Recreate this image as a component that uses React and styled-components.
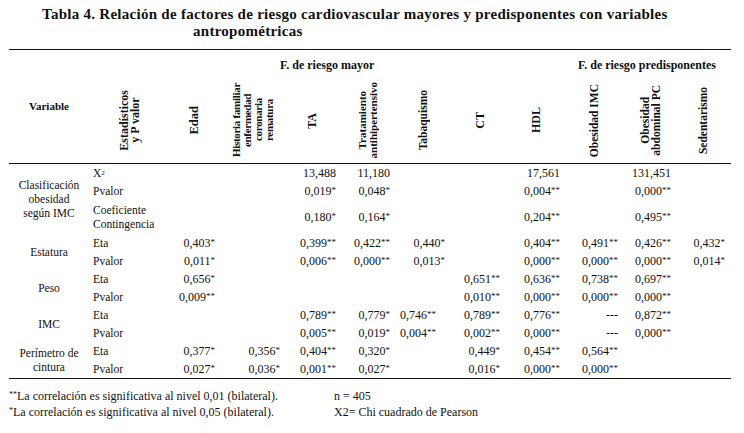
import React from "react";
import styled, { createGlobalStyle } from "styled-components";

const Global = createGlobalStyle`
  html, body { margin: 0; padding: 0; background: #fff; }
  body { font-family: "Liberation Serif", "Times New Roman", serif; color: #111; }
  * { box-sizing: border-box; }
`;

const COLS = "80px 77px 56px 61px 58px 54px 56px 58px 54px 62px 51px 55px";
const KEYS = ["edad", "hist", "ta", "trat", "tab", "ct", "hdl", "obimc", "obpc", "sed"];
const PADS = [7, 3, 5, 5, 6, 9, 3, 7, 5, 6];

const Page = styled.div`
  width: 744px;
  padding: 6px 13px 0 9px;
`;

const Title = styled.div`
  padding-left: 33px;
  font-weight: bold;
  font-size: 15px;
  line-height: 17px;
  letter-spacing: 0.27px;
`;

const TitleLine = styled.div`
  padding-left: ${(p) => p.$indent || 0}px;
  white-space: nowrap;
`;

const Table = styled.div`
  margin-top: 9px;
  width: 722px;
  border-top: 1px solid #111;
  border-bottom: 1px solid #111;
`;

const Head = styled.div`
  display: grid;
  grid-template-columns: ${COLS};
  grid-template-rows: 28px 85px;
  border-bottom: 1px solid #111;
  font-weight: bold;
  font-size: 11px;
`;

const VarHead = styled.div`
  grid-column: 1;
  grid-row: 1 / 3;
  display: flex;
  align-items: center;
  justify-content: center;
  padding-bottom: 2px;
`;

const GroupHead = styled.div`
  grid-row: 1;
  grid-column: ${(p) => p.$cols};
  display: flex;
  align-items: center;
  justify-content: ${(p) => (p.$indent ? "flex-start" : "center")};
  padding-left: ${(p) => p.$indent || 0}px;
  padding-top: 2px;
  font-size: 12px;
  white-space: nowrap;
`;

const RotCell = styled.div`
  grid-row: 2;
  display: flex;
  align-items: center;
  justify-content: center;
  padding-left: ${(p) => p.$shift || 0}px;
`;

const RotText = styled.div`
  writing-mode: vertical-rl;
  transform: rotate(180deg);
  text-align: center;
  font-size: ${(p) => p.$size || 11.5}px;
  letter-spacing: ${(p) => p.$track || 0}px;
  line-height: 11px;
  white-space: nowrap;
`;

const Body = styled.div`
  display: flex;
  flex-direction: column;
  font-size: 12px;
`;

const Group = styled.div`
  display: grid;
  grid-template-columns: ${COLS};
  grid-auto-rows: minmax(18px, auto);
`;

const VarName = styled.div`
  grid-column: 1;
  grid-row: 1 / span ${(p) => p.$span};
  display: flex;
  align-items: center;
  justify-content: center;
  text-align: center;
  line-height: 14px;
  font-size: 11.5px;
`;

const Stat = styled.div`
  grid-column: 2;
  display: flex;
  align-items: center;
  padding-left: 4px;
  line-height: 14px;
  font-size: 11.5px;
  padding-top: ${(p) => (p.$tall ? 3 : 0)}px;
  padding-bottom: ${(p) => (p.$tall ? 3 : 0)}px;
`;

const Val = styled.div`
  display: flex;
  align-items: center;
  justify-content: flex-end;
  padding-right: ${(p) => p.$pad}px;
  white-space: nowrap;
`;

const Stars = styled.span`
  font-size: 9px;
  position: relative;
  top: -1px;
`;

const Sup = styled.sup`
  font-size: 7px;
  line-height: 0;
`;

const Foot = styled.div`
  margin-top: 10px;
  display: grid;
  grid-template-columns: 325px 1fr;
  font-size: 12px;
  line-height: 15px;
`;

const FootStars = styled.span`
  font-size: 8px;
  position: relative;
  top: -3px;
`;

const headers = [
  { lines: ["Estadísticos", "y P valor"], shift: 4, size: 12 },
  { lines: ["Edad"], size: 12.5 },
  { lines: ["Historia familiar", "enfermedad", "coronaria", "rematura"], size: 11, track: -0.3 },
  { lines: ["TA"], size: 12 },
  { lines: ["Tratamiento", "antihipertensivo"], size: 11 },
  { lines: ["Tabaquismo"] },
  { lines: ["CT"], size: 12 },
  { lines: ["HDL"], size: 12 },
  { lines: ["Obesidad IMC"] },
  { lines: ["Obesidad", "abdominal PC"] },
  { lines: ["Sedentarismo"] },
];

const groups = [
  {
    name: ["Clasificación", "obesidad", "según IMC"],
    rows: [
      { stat: "X2", v: { ta: "13,488", trat: "11,180", hdl: "17,561", obpc: "131,451" } },
      { stat: "Pvalor", v: { ta: "0,019*", trat: "0,048*", hdl: "0,004**", obpc: "0,000**" } },
      { stat: ["Coeficiente", "Contingencia"], v: { ta: "0,180*", trat: "0,164*", hdl: "0,204**", obpc: "0,495**" } },
    ],
  },
  {
    name: ["Estatura"],
    rows: [
      { stat: "Eta", v: { edad: "0,403*", ta: "0,399**", trat: "0,422**", tab: "0,440*", hdl: "0,404**", obimc: "0,491**", obpc: "0,426**", sed: "0,432*" } },
      { stat: "Pvalor", v: { edad: "0,011*", ta: "0,006**", trat: "0,000**", tab: "0,013*", hdl: "0,000**", obimc: "0,000**", obpc: "0,000**", sed: "0,014*" } },
    ],
  },
  {
    name: ["Peso"],
    rows: [
      { stat: "Eta", v: { edad: "0,656*", ct: "0,651**", hdl: "0,636**", obimc: "0,738**", obpc: "0,697**" } },
      { stat: "Pvalor", v: { edad: "0,009**", ct: "0,010**", hdl: "0,000**", obimc: "0,000**", obpc: "0,000**" } },
    ],
  },
  {
    name: ["IMC"],
    rows: [
      { stat: "Eta", v: { ta: "0,789**", trat: "0,779*", tab: "0,746**", ct: "0,789**", hdl: "0,776**", obimc: "---", obpc: "0,872**" }, extra: { tab: 9 } },
      { stat: "Pvalor", v: { ta: "0,005**", trat: "0,019*", tab: "0,004**", ct: "0,002**", hdl: "0,000**", obimc: "---", obpc: "0,000**" }, extra: { tab: 9 } },
    ],
  },
  {
    name: ["Perímetro de", "cintura"],
    rows: [
      { stat: "Eta", v: { edad: "0,377*", hist: "0,356*", ta: "0,404**", trat: "0,320*", ct: "0,449*", hdl: "0,454**", obimc: "0,564**" } },
      { stat: "Pvalor", v: { edad: "0,027*", hist: "0,036*", ta: "0,001**", trat: "0,027*", ct: "0,016*", hdl: "0,000**", obimc: "0,000**" } },
    ],
  },
];

const lines = (arr) =>
  arr.map((l, i) => (
    <React.Fragment key={i}>
      {i > 0 && <br />}
      {l}
    </React.Fragment>
  ));

const Value = ({ text }) => {
  if (!text) return null;
  const m = text.match(/^([^*]*)(\**)$/);
  return (
    <>
      {m[1]}
      {m[2] && <Stars>{m[2]}</Stars>}
    </>
  );
};

const StatLabel = ({ stat }) => {
  if (stat === "X2")
    return (
      <>
        X<Sup>2</Sup>
      </>
    );
  if (Array.isArray(stat)) return <span>{lines(stat)}</span>;
  return stat;
};

export default function App() {
  return (
    <Page>
      <Global />
      <Title>
        <TitleLine>
          Tabla 4. Relación de factores de riesgo cardiovascular mayores y predisponentes con variables
        </TitleLine>
        <TitleLine $indent={151}>antropométricas</TitleLine>
      </Title>
      <Table>
        <Head>
          <VarHead>Variable</VarHead>
          <GroupHead $cols="3 / 10" $indent={114}>F. de riesgo mayor</GroupHead>
          <GroupHead $cols="10 / 13">F. de riesgo predisponentes</GroupHead>
          {headers.map((h, i) => (
            <RotCell key={i} $shift={h.shift}>
              <RotText $size={h.size} $track={h.track}>{lines(h.lines)}</RotText>
            </RotCell>
          ))}
        </Head>
        <Body>
          {groups.map((g, gi) => (
            <Group key={gi}>
              <VarName $span={g.rows.length}>
                <span>{lines(g.name)}</span>
              </VarName>
              {g.rows.map((r, ri) => (
                <React.Fragment key={ri}>
                  <Stat $tall={Array.isArray(r.stat)}>
                    <StatLabel stat={r.stat} />
                  </Stat>
                  {KEYS.map((k, ki) => (
                    <Val key={k} $pad={PADS[ki] + ((r.extra && r.extra[k]) || 0)}>
                      <Value text={r.v[k]} />
                    </Val>
                  ))}
                </React.Fragment>
              ))}
            </Group>
          ))}
        </Body>
      </Table>
      <Foot>
        <div>
          <FootStars>**</FootStars>La correlación es significativa al nivel 0,01 (bilateral).
        </div>
        <div>n = 405</div>
        <div>
          <FootStars>*</FootStars>La correlación es significativa al nivel 0,05 (bilateral).
        </div>
        <div>X2= Chi cuadrado de Pearson</div>
      </Foot>
    </Page>
  );
}
